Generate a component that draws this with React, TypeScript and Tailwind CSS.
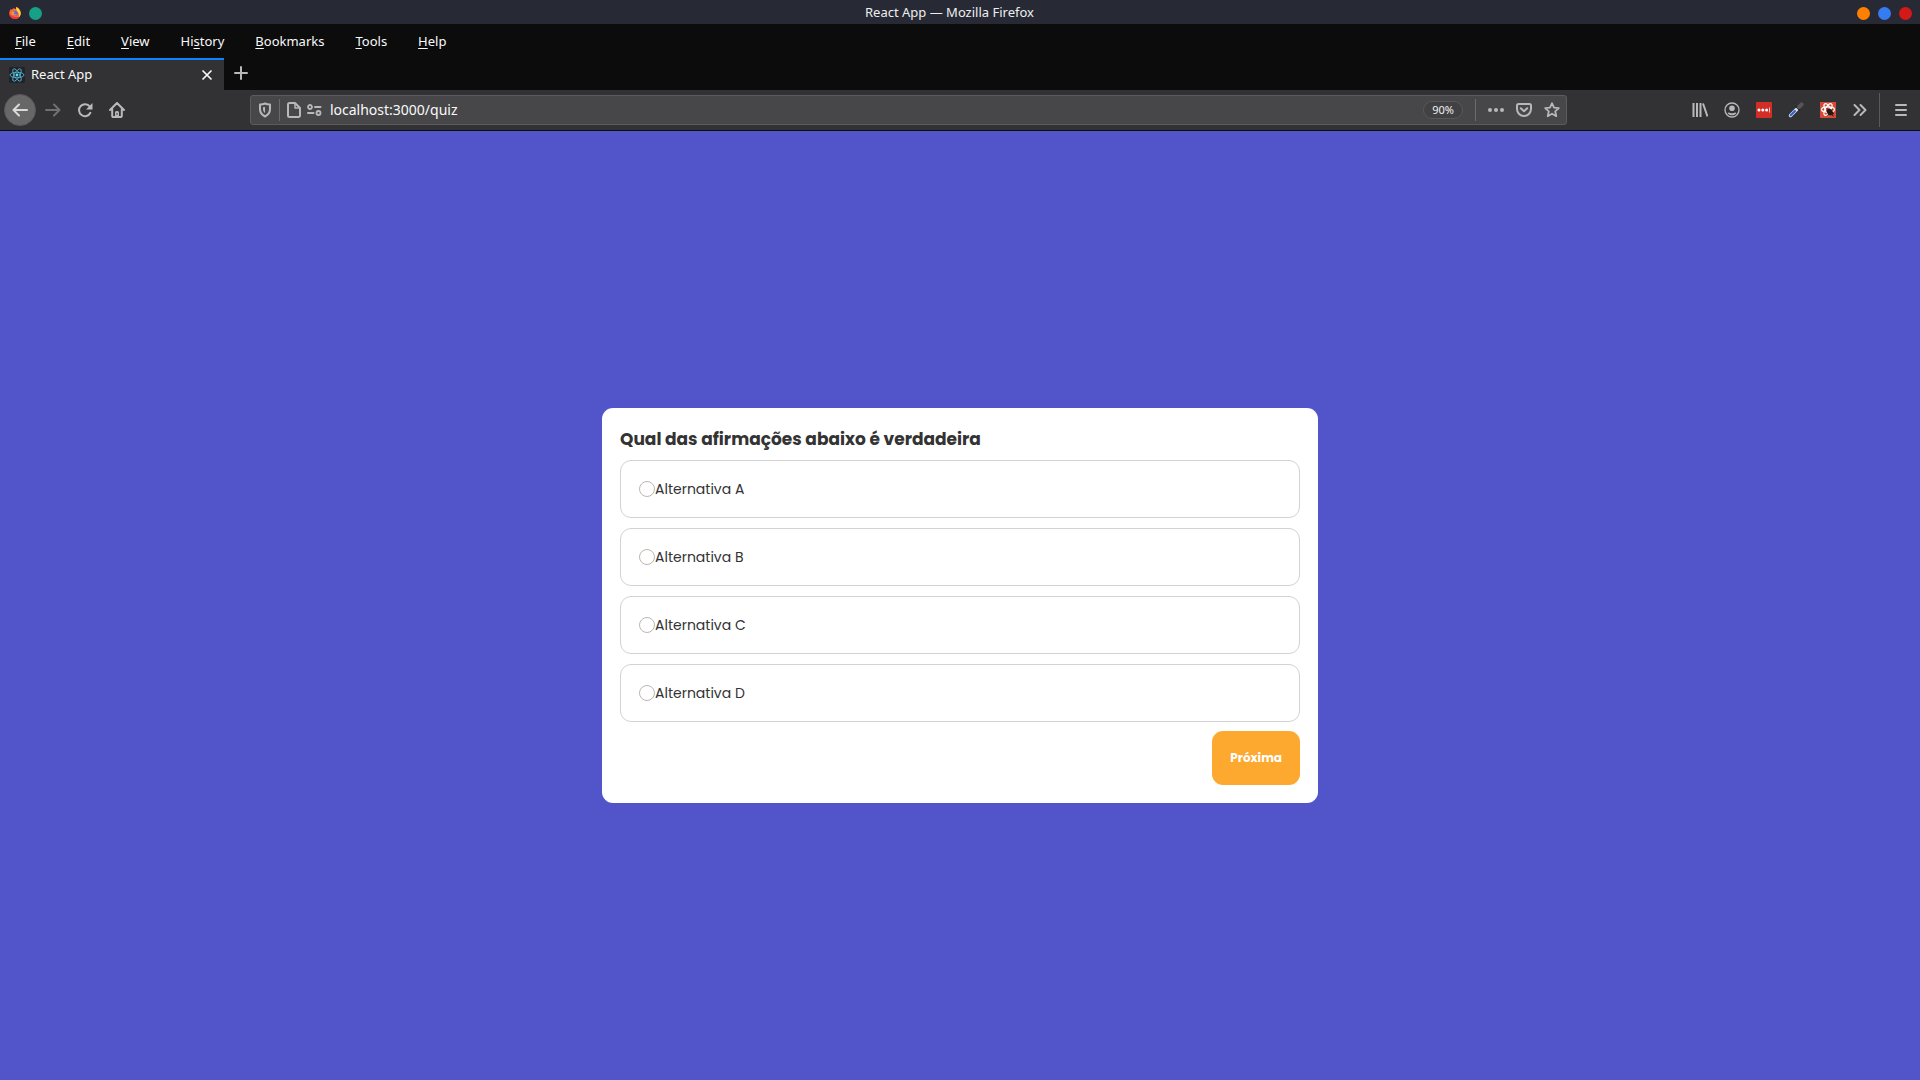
import { useState } from "react";
import type { ReactNode } from "react";

const MENUS = [
  ["", "F", "ile"],
  ["", "E", "dit"],
  ["", "V", "iew"],
  ["Hi", "s", "tory"],
  ["", "B", "ookmarks"],
  ["", "T", "ools"],
  ["", "H", "elp"],
];

const OPTIONS = ["Alternativa A", "Alternativa B", "Alternativa C", "Alternativa D"];

function Icon({ children, className = "" }: { children: ReactNode; className?: string }) {
  return (
    <svg
      viewBox="0 0 16 16"
      className={`size-4 shrink-0 ${className}`}
      fill="none"
      stroke="currentColor"
      strokeWidth="2"
      strokeLinecap="round"
      strokeLinejoin="round"
      aria-hidden="true"
    >
      {children}
    </svg>
  );
}

function ToolButton({ label, children, className = "" }: { label: string; children: ReactNode; className?: string }) {
  return (
    <button type="button" aria-label={label} className={`flex size-8 shrink-0 items-center justify-center ${className}`}>
      {children}
    </button>
  );
}

function FirefoxLogo() {
  return (
    <svg viewBox="0 0 16 16" className="size-3" aria-hidden="true">
      <path
        d="M1.2 4.5 2.5 2.4l.6 1.3C4 2.8 5 2.4 5.8 2.3L6.5.8l1 1.4 1.8.5.3-2.7c3.700 1.400 6.200 5 6 8.900A7.600 7.600 0 0 1 8 16 7.600 7.600 0 0 1 .4 8.500C.3 7 .6 5.700 1.200 4.500Z"
        fill="#ff6a2a"
      />
      <path d="M9.600 0c3.700 1.400 6.200 5 6 8.900-.2 2-1.200 3.800-2.700 5.100 1-3 .3-5.500-1.200-7.200C10.200 5.200 9.200 3 9.600 0Z" fill="#ffd23e" />
      <path d="M.4 9c.6 4 3.600 7 7.600 7 2.600 0 5-1.300 6.400-3.400C11 14 5 14 .4 9Z" fill="#f2304c" />
      <circle cx="8" cy="8.400" r="3.500" fill="#5a6ee0" />
      <path d="M3.500 6.500c1.600-1 3.400-.8 4.500.2L6 8.600c1 1.400 3 1.400 4.300.6-.8 2.400-4 3-5.900 1.200C3.200 9.300 3 7.700 3.500 6.500Z" fill="#ff9331" />
    </svg>
  );
}

function ReactFavicon() {
  return (
    <svg viewBox="0 0 16 16" className="size-4 shrink-0" aria-hidden="true">
      <rect width="16" height="16" rx="1.500" fill="#20232a" />
      <g stroke="#61dafb" strokeWidth=".8" fill="none" opacity=".85">
        <ellipse cx="8" cy="8" rx="7" ry="2.700" />
        <ellipse cx="8" cy="8" rx="7" ry="2.700" transform="rotate(60 8 8)" />
        <ellipse cx="8" cy="8" rx="7" ry="2.700" transform="rotate(120 8 8)" />
      </g>
      <circle cx="8" cy="8" r="1.400" fill="#61dafb" />
    </svg>
  );
}

function TitleBar() {
  return (
    <header className="flex h-6 items-center bg-[#272a34] pt-0.5">
      <div className="flex w-[42px] items-center gap-2 pl-[9px]">
        <FirefoxLogo />
        <span className="size-[13px] rounded-full bg-[#16a085]" />
      </div>
      <h1 className="-mt-0.5 flex-1 text-center text-[13px] leading-5 text-[#eeeef0]">React App — Mozilla Firefox</h1>
      <div className="flex w-[63px] gap-2">
        <button type="button" aria-label="Minimize" className="size-[13px] rounded-full bg-[#ff8000]" />
        <button type="button" aria-label="Maximize" className="size-[13px] rounded-full bg-[#367bf0]" />
        <button type="button" aria-label="Close window" className="size-[13px] rounded-full bg-[#d41919]" />
      </div>
    </header>
  );
}

function MenuBar() {
  return (
    <nav className="flex h-[34px] items-center gap-px bg-[#0c0c0d] text-[13px] text-[#f9f9fa]">
      {MENUS.map(([before, key, after]) => (
        <button key={key + after} type="button" className="px-[15px] leading-5">
          {before}
          <span className="underline underline-offset-2">{key}</span>
          {after}
        </button>
      ))}
    </nav>
  );
}

function TabStrip() {
  return (
    <div className="flex h-8 bg-[#0c0c0d]">
      <div className="flex w-56 items-center border-t-2 border-[#0a84ff] bg-[#323234] pl-[9px] pr-2 text-[13px] text-[#f9f9fa]">
        <ReactFavicon />
        <span className="ml-1.5 flex-1">React App</span>
        <button type="button" aria-label="Close tab" className="flex size-[18px] items-center justify-center">
          <Icon>
            <path d="m4 4 8 8M12 4l-8 8" strokeWidth="1.700" />
          </Icon>
        </button>
      </div>
      <button type="button" aria-label="New tab" className="flex w-[34px] items-center justify-center text-[#b9b9ba]">
        <Icon className="-mt-0.5">
          <path d="M8 2v12M2 8h12" />
        </Icon>
      </button>
    </div>
  );
}

function AddressBar() {
  return (
    <div className="flex h-[30px] min-w-0 flex-[45] items-center rounded-[3px] border border-[#5c5c5e] bg-[#474749] text-[#b8b8ba]">
      <button type="button" aria-label="Tracking protection" className="ml-1.5">
        <Icon>
          <path d="M8 1.500c1.500.7 3.300 1 5 1V7c0 3.500-2 6-5 7.500C5 13 3 10.500 3 7V2.500c1.700 0 3.500-.3 5-1Z" />
          <path d="M8 5v6c-1.300-1-2-2.300-2-4V5.300Z" fill="currentColor" stroke="none" />
        </Icon>
      </button>
      <span className="ml-1.5 h-[22px] w-px bg-[#6a6a70]" />
      <button type="button" aria-label="Site information" className="ml-1.5">
        <Icon>
          <path d="M3.500 1h5.500l5 5v7.500a1.500 1.500 0 0 1-1.500 1.500h-9A1.500 1.500 0 0 1 2 13.500v-11A1.500 1.500 0 0 1 3.500 1Z" />
          <path d="M9 1.500V6h4.500" strokeWidth="1.500" />
        </Icon>
      </button>
      <button type="button" aria-label="Permissions" className="ml-1">
        <Icon>
          <circle cx="4" cy="5" r="2" strokeWidth="1.800" />
          <circle cx="12.500" cy="11" r="2" strokeWidth="1.800" />
          <path d="M9 5h5.500M2 11h5.500" />
        </Icon>
      </button>
      <input
        aria-label="Address"
        defaultValue="localhost:3000/quiz"
        className="ml-2 min-w-0 flex-1 bg-transparent text-sm text-[#f9f9fa] outline-none"
      />
      <button type="button" className="h-[18px] w-10 rounded-full border border-[#58585a] bg-[#414143] text-[11px] leading-4 text-[#f0f0f1]">
        90%
      </button>
      <span className="ml-3 h-[22px] w-px bg-[#6a6a70]" />
      <button type="button" aria-label="Page actions" className="ml-3">
        <Icon>
          <g fill="currentColor" stroke="none">
            <circle cx="2" cy="8" r="2" />
            <circle cx="8" cy="8" r="2" />
            <circle cx="14" cy="8" r="2" />
          </g>
        </Icon>
      </button>
      <button type="button" aria-label="Save to Pocket" className="ml-3">
        <Icon>
          <path d="M2.500 2h11A1.500 1.500 0 0 1 15 3.500V7A7 7 0 0 1 1 7V3.500A1.500 1.500 0 0 1 2.500 2Z" />
          <path d="M4.800 6.200 8 9.200l3.200-3" />
        </Icon>
      </button>
      <button type="button" aria-label="Bookmark this page" className="ml-3 mr-1.5">
        <Icon>
          <path d="m8 1.200 2 4.400 4.800.5-3.600 3.200 1.100 4.900L8 11.700l-4.300 2.500 1.100-4.900L1.200 6.100 6 5.600Z" strokeWidth="1.800" />
        </Icon>
      </button>
    </div>
  );
}

function Toolbar() {
  return (
    <div className="flex h-[41px] items-center border-b border-[#0c0c0d] bg-[#323234] pl-1 pr-[3px] text-[#b9b9ba]">
      <ToolButton label="Back" className="rounded-full border border-[#58585a] bg-[#676768] text-[#dadadb]">
        <Icon>
          <path d="M15 8H1.500M7 2.500 1.500 8 7 13.500" />
        </Icon>
      </ToolButton>
      <ToolButton label="Forward" className="ml-px text-[#707072]">
        <Icon>
          <path d="M1 8h13.500M9 2.500 14.500 8 9 13.500" />
        </Icon>
      </ToolButton>
      <ToolButton label="Reload">
        <Icon>
          <path d="M13.400 10.800A6 6 0 1 1 12.800 4.500" />
          <path d="M15.500 1v6.500H9Z" fill="currentColor" stroke="none" />
        </Icon>
      </ToolButton>
      <ToolButton label="Home">
        <Icon>
          <path d="M1 8l7-7 7 7M3.200 7v7a1 1 0 0 0 1 1h7.600a1 1 0 0 0 1-1V7" />
          <path d="M6 15v-4.500A1.500 1.500 0 0 1 7.500 9h1A1.500 1.500 0 0 1 10 10.500V15Z" fill="currentColor" stroke="none" />
          <path d="M8 11.500v1" stroke="#323234" strokeWidth="1" />
        </Icon>
      </ToolButton>
      <div className="flex-[4]" />
      <AddressBar />
      <div className="flex-[4]" />
      <ToolButton label="Library">
        <Icon>
          <path d="M1.500 1v14M5 1v14M8.500 1v14M11 1.500 15.500 14.500" strokeLinecap="butt" />
        </Icon>
      </ToolButton>
      <ToolButton label="Account">
        <Icon>
          <circle cx="8" cy="8" r="7" strokeWidth="1.300" />
          <circle cx="8" cy="6.200" r="2.800" fill="currentColor" stroke="none" />
          <path d="M3.500 11c1.500-1.500 2.500.3 4.500.3s3-1.800 4.500-.3c-1 1.500-2.700 2.300-4.500 2.300S4.500 12.500 3.500 11Z" fill="currentColor" stroke="none" />
        </Icon>
      </ToolButton>
      <ToolButton label="Password manager">
        <Icon>
          <rect width="16" height="16" rx="1" fill="#d32d27" stroke="none" />
          <g fill="#fff" stroke="none">
            <circle cx="3" cy="8" r="1.500" />
            <circle cx="6.800" cy="8" r="1.500" />
            <circle cx="10.600" cy="8" r="1.500" />
            <path d="M13.300 5.500h.7v5h-.7z" />
          </g>
        </Icon>
      </ToolButton>
      <ToolButton label="Color picker">
        <Icon>
          <path d="M2.500 13.500 9.500 6.500" stroke="#d6e1f4" strokeWidth="3.400" />
          <path d="M2.700 13.300 7 9" stroke="#2b5fd0" strokeWidth="2" />
          <path d="m8 4.500 3.500 3.500" stroke="#202022" strokeWidth="1.600" />
          <path d="m11 5 2.700-2.700" stroke="#555557" strokeWidth="4" />
        </Icon>
      </ToolButton>
      <ToolButton label="React Developer Tools">
        <Icon>
          <rect width="16" height="16" fill="#d84a38" stroke="none" />
          <g stroke="#fff" strokeWidth="1.200">
            <ellipse cx="8" cy="7.500" rx="6.500" ry="2.600" />
            <ellipse cx="8" cy="7.500" rx="6.500" ry="2.600" transform="rotate(60 8 7.500)" />
            <ellipse cx="8" cy="7.500" rx="6.500" ry="2.600" transform="rotate(120 8 7.500)" />
          </g>
          <ellipse cx="10" cy="10.300" rx="2.800" ry="3.600" fill="#231815" stroke="none" transform="rotate(-35 10 10.300)" />
          <path d="m6.500 9 7 2.500M8 13l4-5.500M7 6.500l2 2M12 13l1.500 1" stroke="#231815" strokeWidth=".9" />
        </Icon>
      </ToolButton>
      <ToolButton label="More tools">
        <Icon>
          <path d="m2.500 3 5 5-5 5M8.500 3l5 5-5 5" />
        </Icon>
      </ToolButton>
      <span className="ml-[3px] h-[34px] w-px bg-[#5a5a5c]" />
      <ToolButton label="Open menu" className="ml-[5px]">
        <Icon>
          <path d="M3 3h10M3 8h10M3 13h10" />
        </Icon>
      </ToolButton>
    </div>
  );
}

function QuizCard() {
  const [answer, setAnswer] = useState("");
  return (
    <form
      onSubmit={(event) => event.preventDefault()}
      className="w-full max-w-[716px] rounded-[11px] bg-white p-[18px] font-[Poppins,Inter,sans-serif] text-[#333333]"
    >
      <fieldset className="flex flex-col gap-2.5">
        <legend className="w-full pb-2 text-[17px] leading-[26px] font-bold">Qual das afirmações abaixo é verdadeira</legend>
        {OPTIONS.map((option) => (
          <label key={option} className="flex h-[58px] items-center rounded-[11px] border border-[#d3d3d3] px-[18px] text-sm">
            <input
              type="radio"
              name="answer"
              value={option}
              checked={answer === option}
              onChange={() => setAnswer(option)}
              className="size-4 shrink-0 appearance-none rounded-full border border-[#bdb7b1] bg-white checked:border-4 checked:border-[#5254c9]"
            />
            {option}
          </label>
        ))}
      </fieldset>
      <div className="mt-[9px] flex justify-end">
        <button type="submit" className="rounded-[11px] bg-[#fda82f] px-[18px] py-[17px] text-xs leading-5 font-bold text-white">
          Próxima
        </button>
      </div>
    </form>
  );
}

export default function App() {
  return (
    <div className="flex min-h-screen flex-col font-['Noto_Sans',sans-serif]">
      <TitleBar />
      <MenuBar />
      <TabStrip />
      <Toolbar />
      <main className="flex flex-1 items-center justify-center bg-[#5254c9]">
        <QuizCard />
      </main>
    </div>
  );
}
